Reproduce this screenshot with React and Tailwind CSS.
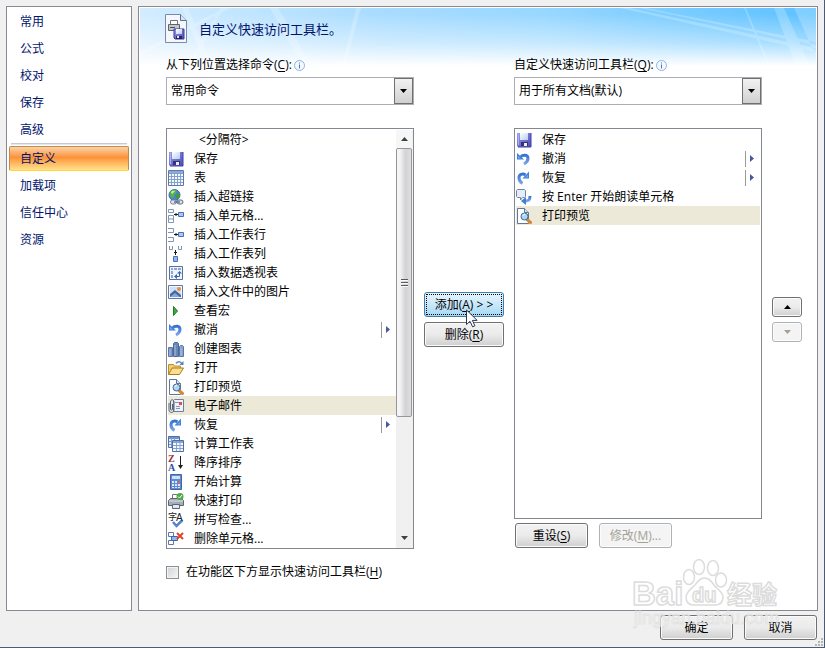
import { useState } from "react";

const navItems = ["常用", "公式", "校对", "保存", "高级", "自定义", "加载项", "信任中心", "资源"];

const commands = [
  { label: "<分隔符>", separator: true },
  { label: "保存", icon: "save" },
  { label: "表", icon: "table" },
  { label: "插入超链接", icon: "link" },
  { label: "插入单元格...", icon: "insertCell" },
  { label: "插入工作表行", icon: "insertRow" },
  { label: "插入工作表列", icon: "insertCol" },
  { label: "插入数据透视表", icon: "pivot" },
  { label: "插入文件中的图片", icon: "picture" },
  { label: "查看宏", icon: "macro" },
  { label: "撤消", icon: "undo", menu: true },
  { label: "创建图表", icon: "chart" },
  { label: "打开", icon: "open" },
  { label: "打印预览", icon: "preview" },
  { label: "电子邮件", icon: "mail" },
  { label: "恢复", icon: "redo", menu: true },
  { label: "计算工作表", icon: "calcSheet" },
  { label: "降序排序", icon: "sortDesc" },
  { label: "开始计算", icon: "calculator" },
  { label: "快速打印", icon: "print" },
  { label: "拼写检查...", icon: "spelling" },
  { label: "删除单元格...", icon: "deleteCell" },
];

const toolbar = [
  { label: "保存", icon: "save" },
  { label: "撤消", icon: "undo", menu: true },
  { label: "恢复", icon: "redo", menu: true },
  { label: "按 Enter 开始朗读单元格", icon: "speak" },
  { label: "打印预览", icon: "preview" },
];

const icons = {
  save: (
    <>
      <path d="M1 1h14v14H2L1 14z" fill="url(#disk)" />
      <path d="M15 1v14H2" fill="none" stroke="#4343a0" />
      <path d="M4 1h8v7H4z" fill="url(#paper)" />
      <path d="M5 10h7v4H5z" fill="#34346e" />
      <path d="M8 11h3v3H8z" fill="#e8edf9" />
      <path d="M2 2h1v11H2z" fill="#aeb0f5" />
    </>
  ),
  table: (
    <>
      <path d="M.5 .5h15v15H.5z" fill="#f4f8ff" stroke="#5b7ba9" />
      <path d="M1 1h14v2H1z" fill="#8eaedb" />
      <path d="M3.500 1v14M6.500 1v14M9.500 1v14M12.500 1v14M1 3.500h14M1 6.500h14M1 9.500h14M1 12.500h14" stroke="#86a1cb" />
    </>
  ),
  link: (
    <>
      <circle cx="6.500" cy="6" r="5.500" fill="#4d82cf" stroke="#3f6cae" />
      <path d="M3 2c2-2 5-1.500 5.500 0S6 5 6 7s-2 3-3 1-2-4 0-6z" fill="#57b54a" />
      <path d="M8 5c2-1 4 0 4 1s-1 4-2.500 4S7 6 8 5z" fill="#3f9e3c" />
      <path d="M3 3c1-1.500 3-1.500 4-1L4 5z" fill="#c6efb0" />
      <rect x="2.500" y="11" width="6" height="4" rx="2" fill="#dfe5ee" stroke="#75829a" />
      <rect x="9" y="11" width="6" height="4" rx="2" fill="#dfe5ee" stroke="#596983" />
      <path d="M6 13h6" stroke="#66748b" strokeWidth="1.500" />
    </>
  ),
  insertCell: (
    <>
      <path d="M.5 1.500h5v3h-5zM.5 7.500h5v7h-5zM.5 11h5" fill="#fff" stroke="#8195b5" />
      <path d="M6 6.500h4M8 5v3" stroke="#1b1b1b" />
      <path d="M10.500 4.500h5v4h-5z" fill="#a9c8f5" stroke="#4a70b2" />
    </>
  ),
  insertRow: (
    <>
      <path d="M0 1.500h5.500v4H0M0 10.500h5.500v4H0" fill="#fff" stroke="#8195b5" />
      <path d="M6 7.500h4M8 6v3" stroke="#1b1b1b" />
      <path d="M10.500 5.500h5v4h-5z" fill="#a9c8f5" stroke="#4a70b2" />
    </>
  ),
  insertCol: (
    <>
      <path d="M1.500 0v3.500h3V0M10.500 0v3.500h3V0" fill="#fff" stroke="#8195b5" />
      <path d="M7.500 4v5M6 6.500h3" stroke="#1b1b1b" />
      <path d="M5.500 10.500h4v5h-4z" fill="#8fb6f2" stroke="#4a70b2" />
    </>
  ),
  pivot: (
    <>
      <path d="M1.500 1.500h13v13h-13z" fill="#f0f5fd" stroke="#55719e" />
      <path d="M3 3h2v2H3zM6 3h3v2H6zM10 3h3v2h-3zM3 6h2v3H3zM3 10h2v3H3z" fill="#8ba6d0" />
      <path d="M7 11.500h4.500V7" fill="none" stroke="#3c62a5" />
      <path d="M9 9v5l-3-2.500zM9 8.500h5L11.500 6z" fill="#3c62a5" />
    </>
  ),
  picture: (
    <>
      <path d="M.5 1.500h14v13H.5z" fill="#f3f7fd" stroke="#6179a3" />
      <path d="M2 3h11v10H2z" fill="#cfe1f8" />
      <path d="M2 13v-3l5-4 6 5v2z" fill="#46689f" />
      <path d="M2 13l5-4 5 4z" fill="#86a8d9" />
      <circle cx="11" cy="5" r="2" fill="#f08a3c" />
    </>
  ),
  macro: <path d="M5.500 3.500l4 4.500-4 4.500z" fill="#3cae3c" stroke="#1e7d25" />,
  undo: (
    <>
      <path d="M4.500 6C7 3.500 12 3.500 12 7.500c0 2.500-1.500 4-4 5.500" fill="none" stroke="url(#arrow)" strokeWidth="3" />
      <path d="M1 2l7 6.500H1z" fill="#3f7fda" />
      <path d="M2 4.500l3 3H2z" fill="#6fa4ee" />
    </>
  ),
  chart: (
    <>
      <path d="M.5 6.500h4v9h-4z" fill="#7d97c4" stroke="#5c76a3" />
      <path d="M5.500 2.500l1-1h3l1 1v13h-5z" fill="#6a87ba" stroke="#4d6895" />
      <path d="M11.500 5.500l1-1h2l1 1v10h-4z" fill="#88a3cf" stroke="#5c76a3" />
      <path d="M2 8v7M7 4v11M13 7v8" stroke="#a9bee0" />
    </>
  ),
  open: (
    <>
      <path d="M.5 14.500v-10h5l1 1.500h6v3" fill="#f2cd6b" stroke="#b98f3c" />
      <path d="M.5 14.500l3.500-6.500h11.500l-4 6.500z" fill="#fbdf8c" stroke="#a87b25" />
      <path d="M8 3.500c1.500-2.500 4-2.500 6 0" fill="none" stroke="#6d8fbd" strokeWidth="1.500" />
      <path d="M15.500 1v4h-4z" fill="#5c7fae" />
    </>
  ),
  preview: (
    <>
      <path d="M1.500 .5h7l4 4v11h-11z" fill="#fff" stroke="#60779c" />
      <path d="M8.500 .5v4h4" fill="#d5e2f5" stroke="#60779c" />
      <path d="M11 11.500l3.500 3" stroke="#d08a35" strokeWidth="3" strokeLinecap="round" />
      <circle cx="8.500" cy="8.500" r="3.500" fill="#a9d7f8" stroke="#47658e" />
      <path d="M7 8c0-1 1-2 2-2" fill="none" stroke="#fff" />
    </>
  ),
  mail: (
    <>
      <path d="M5.500 2.500l1-1h9v12h-10z" fill="#eef3fb" stroke="#6d7f9e" />
      <path d="M8 8.500h4M8 10.500h4M7 4.500h4" stroke="#8698b6" />
      <path d="M11 4h3v3h-3z" fill="#d05746" />
      <path d="M1 5v6.500c0 4 5 4 5 0V4c0-3-3.500-3-3.500 0v7c0 1.500 2 1.500 2 0V6" fill="none" stroke="#53627c" />
    </>
  ),
  redo: (
    <>
      <path d="M9.500 5C6.500 3 3 4.500 3 8c0 2.500 1 4 3.500 5.500" fill="none" stroke="url(#arrow)" strokeWidth="3" />
      <path d="M13 1.500v7H6.500z" fill="#3f7fda" />
      <path d="M12 4.500v3H9z" fill="#6fa4ee" />
    </>
  ),
  calcSheet: (
    <>
      <path d="M.5 .5h11v11H.5z" fill="#e4eefb" stroke="#4f70a6" />
      <path d="M1 1h10v2H1z" fill="#6f94cf" />
      <path d="M3.500 2v9M6.500 2v9M1 5.500h9M1 8.500h9" stroke="#7f9cc9" />
      <path d="M4.500 4.500h11v11h-11z" fill="#f4f8ff" stroke="#4f70a6" />
      <path d="M5 5h10v2H5z" fill="#83a5da" />
      <path d="M8.500 5v10M12 5v10M5 9.500h10M5 12.500h10" stroke="#86a1cb" />
    </>
  ),
  sortDesc: (
    <>
      <text x="0" y="7" fontFamily="Liberation Serif" fontWeight="bold" fontSize="10" fill="#9a2f3a">
        Z
      </text>
      <text x="0" y="16" fontFamily="Liberation Serif" fontWeight="bold" fontSize="10" fill="#2f4fa0">
        A
      </text>
      <path d="M12.500 1v11" stroke="#1d1d1d" />
      <path d="M10 10h5l-2.500 4z" fill="#1d1d1d" />
    </>
  ),
  calculator: (
    <>
      <path d="M2.500 .5h11v15h-11z" fill="#5f8ad6" stroke="#4466a3" />
      <path d="M4 2h8v3H4z" fill="#cfe2fa" />
      <path d="M4 7h2v2H4zM7 7h2v2H7zM4 10h2v2H4zM7 10h2v2H7zM10 10h2v2h-2zM4 13h2v1H4zM7 13h2v1H7zM10 13h2v1h-2z" fill="#dbe7fb" />
      <path d="M10 7h2v2h-2z" fill="#e2604e" />
    </>
  ),
  print: (
    <>
      <path d="M4.500 6V1.500h7V6" fill="#fff" stroke="#6d7683" />
      <path d="M.5 7.500l2-2h11l2 2v5H.5z" fill="#a4adb9" stroke="#5d6671" />
      <path d="M1 8h14" stroke="#dce1e8" />
      <path d="M4.500 11.500h7v4h-7z" fill="#dfe9f7" stroke="#5d6671" />
      <circle cx="12" cy="3.500" r="3.500" fill="#4fab48" />
      <path d="M10 3.500l1.500 1.500 2.500-3" fill="none" stroke="#fff" />
    </>
  ),
  spelling: (
    <>
      <path d="M5 10l3.500 4 6-6" fill="none" stroke="#5282d3" strokeWidth="2.500" />
      <text x="0" y="8" fontFamily="Noto Sans CJK SC" fontSize="9" fill="#20242c">
        字
      </text>
      <text x="8" y="9" fontFamily="Liberation Sans" fontSize="10" fill="#20242c">
        A
      </text>
    </>
  ),
  deleteCell: (
    <>
      <path d="M.5 1.500h5v4h-5zM.5 9.500h5v4h-5z" fill="#fff" stroke="#5b78aa" />
      <path d="M3.500 5.500h6v4h-6z" fill="#8fb6f2" stroke="#3f67ab" />
      <path d="M9 2l6 6M15 2L9 8" stroke="#e04428" strokeWidth="2" />
    </>
  ),
  speak: (
    <>
      <path d="M1.500 .5h7l1 1v6l-1 1h-2l-2 2.500V8.500h-3l-1-1v-6z" fill="#e6edf8" stroke="#7183a3" />
      <path d="M14 7c0 4-1 5-5 5" fill="none" stroke="url(#arrow)" strokeWidth="3" />
      <path d="M10 8v8l-5-4z" fill="#3f7fda" />
    </>
  ),
};

const Icon = ({ name }) => (
  <svg className="h-4 w-4 shrink-0" viewBox="0 0 16 16" aria-hidden="true">
    {icons[name]}
  </svg>
);

// Gradients shared by the command icons
const IconDefs = () => (
  <svg className="absolute h-0 w-0" aria-hidden="true">
    <defs>
      <linearGradient id="disk" x1="0" y1="0" x2="1" y2="1">
        <stop offset="0" stopColor="#9a9cf0" />
        <stop offset="1" stopColor="#4a4ab4" />
      </linearGradient>
      <linearGradient id="paper" x1="0" y1="0" x2="1" y2="1">
        <stop offset="0" stopColor="#ffffff" />
        <stop offset="1" stopColor="#b5cdf0" />
      </linearGradient>
      <linearGradient id="arrow" x1="0" y1="0" x2="0" y2="1">
        <stop offset="0" stopColor="#3573d2" />
        <stop offset="1" stopColor="#7ba6ea" />
      </linearGradient>
    </defs>
  </svg>
);

const Triangle = ({ up, className = "" }) => (
  <svg className={`h-1 w-[7px] ${className}`} viewBox="0 0 7 4" fill="currentColor" aria-hidden="true">
    <path d={up ? "M0 4L3.500 0 7 4z" : "M0 0h7L3.500 4z"} />
  </svg>
);

const buttonBase = "flex items-center justify-center rounded-[3px] border text-xs whitespace-nowrap";
const buttonNormal =
  "border-[#707070] text-black bg-linear-to-b from-[#f2f2f2] from-0% via-[#ebebeb] via-50% to-[#cfcfcf] to-100% shadow-[inset_0_0_0_1px_#fbfbfb]";
const buttonDisabled = "border-[#adb2b5] text-[#a5a295] bg-[#f4f4f4] shadow-[inset_0_0_0_1px_#fcfcfc]";

const Button = ({ className = "", disabled, children, ...rest }) => (
  <button
    type="button"
    disabled={disabled}
    className={`${buttonBase} ${disabled ? buttonDisabled : buttonNormal} ${className}`}
    {...rest}
  >
    {children}
  </button>
);

const InfoIcon = () => (
  <svg className="h-[11px] w-[11px]" viewBox="0 0 11 11" aria-hidden="true">
    <circle cx="5.500" cy="5.500" r="5" fill="#f5f9ff" stroke="#8fb0e0" />
    <path d="M5 2.500h1v1H5zM5 4.500h1v4H5z" fill="#4a78c4" />
  </svg>
);

const Picker = ({ id, label, hotkey, value }) => (
  <>
    <label htmlFor={id} className="flex h-5 items-center gap-0.5">
      <span>
        {label}(<u className="underline-offset-2">{hotkey}</u>):
      </span>
      <InfoIcon />
    </label>
    <div className="relative mt-0.5">
      <select
        id={id}
        className="block h-7 w-full appearance-none border border-[#abadb3] bg-white pr-6 pl-1 text-xs outline-none"
      >
        <option>{value}</option>
      </select>
      <span className="pointer-events-none absolute inset-y-px right-px flex w-[19px] items-center justify-center border border-[#707070] bg-linear-to-b from-[#f2f2f2] to-[#d0d0d0]">
        <Triangle />
      </span>
    </div>
  </>
);

const CommandList = ({ items, selected, onSelect, name }) => (
  <ul role="listbox" aria-label={name} className="min-w-0 flex-1">
    {items.map((item, i) => (
      <li
        key={item.label}
        role="option"
        aria-selected={selected === i}
        onClick={() => onSelect(i)}
        className={`flex h-[19px] cursor-default items-center gap-2.5 ${selected === i ? "bg-[#ece9d8]" : ""}`}
      >
        {item.separator ? (
          <span className="pl-[31px]">{item.label}</span>
        ) : (
          <>
            <Icon name={item.icon} />
            <span className="flex-1 truncate">{item.label}</span>
          </>
        )}
        {item.menu && (
          <span className="flex h-4 w-[15px] items-center border-l border-[#9a9a9a] pl-1">
            <svg className="h-[7px] w-1" viewBox="0 0 4 7" aria-hidden="true">
              <path d="M0 0l4 3.500L0 7z" fill="#46599c" />
            </svg>
          </span>
        )}
      </li>
    ))}
  </ul>
);

const ScrollBar = () => (
  <div className="flex w-[17px] flex-col bg-[#f0f0f0] pr-px" aria-hidden="true">
    <div className="flex h-[18px] items-center justify-center bg-[#f6f6f6]">
      <Triangle up className="text-[#404040]" />
    </div>
    <div className="flex basis-[269px] items-center justify-center rounded-xs border border-[#979797] bg-linear-to-r from-[#f5f5f5] from-20% via-[#d2d2d6] via-60% to-[#dedee0]">
      <svg className="h-2 w-[7px]" viewBox="0 0 7 8">
        <path d="M0 .5h7M0 3.500h7M0 6.500h7" stroke="#5a5a5a" />
        <path d="M0 1.500h7M0 4.500h7M0 7.500h7" stroke="#fafafa" />
      </svg>
    </div>
    <div className="flex flex-1 items-end justify-center pb-2">
      <Triangle className="text-[#404040]" />
    </div>
  </div>
);

const Banner = () => (
  <svg
    className="absolute inset-x-px top-px h-[58px] w-[calc(100%-2px)]"
    viewBox="0 0 676 58"
    preserveAspectRatio="none"
    aria-hidden="true"
  >
    <defs>
      <linearGradient id="sky" x1="0" x2="1">
        <stop offset="0" stopColor="#d3ecff" />
        <stop offset=".35" stopColor="#a9dcff" />
        <stop offset=".6" stopColor="#98d7ff" />
        <stop offset="1" stopColor="#5cc1ff" />
      </linearGradient>
      <linearGradient id="fade" x1="0" y1="0" x2="0" y2="1">
        <stop offset=".1" stopColor="#fff" stopOpacity="0" />
        <stop offset=".6" stopColor="#fff" stopOpacity=".45" />
        <stop offset="1" stopColor="#fff" />
      </linearGradient>
    </defs>
    <path d="M0 0h676v58H0z" fill="url(#sky)" />
    <g fill="#fff" fillOpacity=".22">
      <path d="M480 0h10l186 40v4zM500 0h6l170 34v3zM634 0h10l26 58h-14zM604 0h2l24 58h-2zM654 0l22 48V0z" />
      <path d="M0 44L84 0h6L0 48zM42 0h6l24 58h-6zM80 0h4L50 58h-3zM216 0h5l-16 58h-3zM130 0h8l34 58h-10z" />
    </g>
    <path d="M0 0h676v58H0z" fill="url(#fade)" />
  </svg>
);

const TitleIcon = () => (
  <svg className="h-[30px] w-[23px]" viewBox="0 0 23 30" aria-hidden="true">
    <path d="M.5 .5h15l6 6v22H.5z" fill="#f4f8fe" stroke="#7c8aa3" />
    <path d="M15.500 .5v6h6" fill="#d7e3f4" stroke="#5e6f8d" />
    <path d="M5.500 11V6.500h7V11" fill="#fff" stroke="#6f747c" />
    <path d="M3.500 10.500h11v6h-11z" fill="#c3c7cd" stroke="#5d636c" />
    <path d="M5 13.500h5" stroke="#4b5058" />
    <path d="M9 15h10v10h-9l-1-1z" fill="url(#disk)" stroke="#3a3a96" />
    <path d="M11 15h6v5h-6z" fill="url(#paper)" />
    <path d="M11 22h6v3h-6z" fill="#26265e" />
    <path d="M12 22h2v2h-2z" fill="#e4e8f6" />
  </svg>
);

const Pointer = () => (
  <svg className="pointer-events-none absolute top-[17px] left-[42px] h-[19px] w-3" viewBox="0 0 12 19" aria-hidden="true">
    <path
      d="M.5 1v14.500L4 12.300l2.600 5.500 2.300-1-2.500-5.400h4.800z"
      fill="#fff"
      stroke="#2d3550"
      strokeLinejoin="round"
    />
  </svg>
);

const Watermark = () => (
  <svg
    className="pointer-events-none absolute right-[43px] bottom-[17px] h-[74px] w-[150px]"
    viewBox="0 0 150 74"
    aria-hidden="true"
  >
    <g fill="#fff" fillOpacity=".7" stroke="#dcdcdc" strokeWidth="1.500">
      <text x="1" y="49" fontFamily="Liberation Sans" fontWeight="bold" fontSize="33">
        Bai
      </text>
      <ellipse cx="58" cy="21" rx="5.500" ry="7.500" />
      <ellipse cx="68" cy="11" rx="5.500" ry="7.500" />
      <ellipse cx="82" cy="12" rx="5.500" ry="7.500" />
      <ellipse cx="90" cy="24" rx="5.500" ry="7" />
      <path d="M73 22c5 0 7 3 10 7 3 4 9 7 9 12 0 5-3 8-8 8H63c-5 0-8-3-8-8 0-5 5-8 9-12 3-4 5-7 9-7z" />
      <text x="61" y="46" fontFamily="Liberation Sans" fontWeight="bold" fontSize="20">
        du
      </text>
      <text x="96" y="48" fontFamily="Noto Sans CJK SC" fontWeight="bold" fontSize="25">
        经验
      </text>
    </g>
    <text
      x="3"
      y="68"
      fontFamily="Liberation Sans"
      fontSize="18"
      fill="#fff"
      fillOpacity=".6"
      stroke="#dedede"
      strokeOpacity=".8"
    >
      jingyan.baidu.com
    </text>
  </svg>
);

const Sidebar = ({ active, onChange }) => (
  <nav className="flex w-[126px] shrink-0 flex-col border border-[#868a93] bg-white px-0.5 pt-px">
    {navItems.map((item, i) => (
      <div key={item}>
        {i === 5 && <div className="mx-0.5 mb-px h-0.5 border-t border-[#c3cad3] bg-[#e4e9ef]" />}
        <button
          type="button"
          onClick={() => onChange(i)}
          className={`block w-full text-left text-[#00156e] ${
            active === i
              ? "mb-px h-[25px] rounded-xs border border-[#c58b46] border-b-[#ffd23e] bg-linear-to-b from-[#f9d3a4] from-0% via-[#fb9237] via-45% to-[#ffe28a] to-100% px-2.5"
              : "h-[27px] px-[11px]"
          }`}
        >
          {item}
        </button>
      </div>
    ))}
  </nav>
);

const App = () => {
  const [page, setPage] = useState(5);
  const [command, setCommand] = useState(14);
  const [entry, setEntry] = useState(4);

  return (
    <div className="relative flex min-h-screen flex-col border-r border-b border-[#4b5c72] bg-[#f0f0f0] pt-1.5 pr-1.5 pl-1.5 font-['Open_Sans','Noto_Sans_CJK_SC',sans-serif] text-xs text-black">
      <IconDefs />
      <div className="flex gap-1.5">
        <Sidebar active={page} onChange={setPage} />

        <main className="relative min-w-0 flex-1 border border-[#868a93] bg-white pt-[7px] pr-[15px] pb-7 pl-[26px]">
          <Banner />
          <div className="relative">
            <header className="flex h-[30px] items-center gap-[11px]">
              <TitleIcon />
              <h1 className="text-[13px] leading-5 text-[#00156e]">自定义快速访问工具栏。</h1>
            </header>

            <div className="mt-[11px] grid grid-cols-[minmax(0,1fr)_80px_minmax(0,1fr)_30px] gap-2.5 pl-px">
              <section className="flex flex-col">
                <Picker id="source" label="从下列位置选择命令" hotkey="C" value="常用命令" />
                <div className="mt-[23px] flex border border-[#828790] bg-white p-px pr-0 pb-0">
                  <CommandList name="命令" items={commands} selected={command} onSelect={setCommand} />
                  <ScrollBar />
                </div>
              </section>

              <div className="flex flex-col gap-[5px] pt-[237px]">
                <div className="relative">
                  <button
                    type="button"
                    className="flex h-[25px] w-full items-center justify-center rounded-[3px] border border-[#3c7fb1] bg-linear-to-b from-[#e8f5fc] from-0% via-[#c8e8fa] via-50% to-[#a5d8f3] to-100% p-px whitespace-nowrap"
                  >
                    <span className="flex h-full w-full items-center justify-center border border-dotted border-black">
                      <span>
                        添加(<u className="underline-offset-2">A</u>) &gt; &gt;
                      </span>
                    </span>
                  </button>
                  <Pointer />
                </div>
                <Button className="h-[25px]">
                  <span>
                    删除(<u className="underline-offset-2">R</u>)
                  </span>
                </Button>
              </div>

              <section className="flex flex-col">
                <Picker id="target" label="自定义快速访问工具栏" hotkey="Q" value="用于所有文档(默认)" />
                <div className="mt-[23px] flex flex-1 border border-[#828790] bg-white p-px">
                  <CommandList name="工具栏" items={toolbar} selected={entry} onSelect={setEntry} />
                </div>
                <div className="mt-1 mb-px flex gap-[11px] pl-px">
                  <Button className="h-[25px] w-[73px]">
                    <span>
                      重设(<u className="underline-offset-2">S</u>)
                    </span>
                  </Button>
                  <Button className="h-[25px] w-[73px]" disabled>
                    <span>
                      修改(<u className="underline-offset-2">M</u>)...
                    </span>
                  </Button>
                </div>
              </section>

              <div className="flex flex-col gap-[5px] pt-[242px]">
                <Button className="h-5" aria-label="上移">
                  <Triangle up />
                </Button>
                <Button className="h-5" aria-label="下移" disabled>
                  <Triangle />
                </Button>
              </div>
            </div>

            <label className="mt-[13px] flex h-5 items-center gap-[7px] pl-px">
              <input
                type="checkbox"
                className="h-[13px] w-[13px] appearance-none border border-[#8e8f8f] bg-linear-to-br from-[#cfd3d8] to-[#f6f6f6] shadow-[inset_0_0_0_1px_#f4f4f4] checked:bg-[#3c7fb1]"
              />
              <span>
                在功能区下方显示快速访问工具栏(<u className="underline-offset-2">H</u>)
              </span>
            </label>
          </div>
        </main>
      </div>

      <footer className="flex justify-end gap-[11px] pt-1 pr-px">
        <Button className="h-[25px] w-[73px]">确定</Button>
        <Button className="h-[25px] w-[73px]">取消</Button>
      </footer>

      <svg className="absolute right-px bottom-px h-2 w-2" viewBox="0 0 8 8" fill="#b4b4b4" aria-hidden="true">
        <path d="M6 0h2v2H6zM3 3h2v2H3zM6 3h2v2H6zM0 6h2v2H0zM3 6h2v2H3zM6 6h2v2H6z" />
      </svg>
      <Watermark />
    </div>
  );
};

export default App;
